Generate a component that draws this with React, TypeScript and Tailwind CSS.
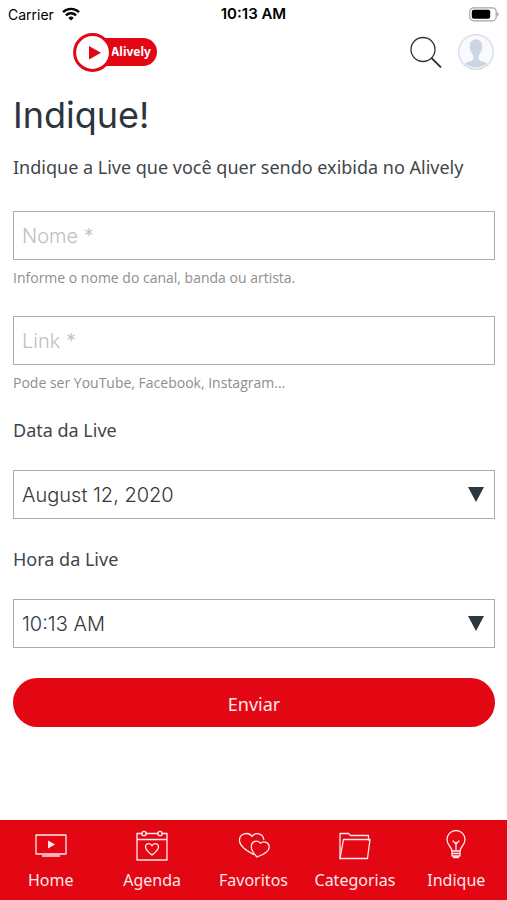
import type { ReactNode } from "react";

const line = {
  fill: "none",
  stroke: "currentColor",
  strokeWidth: 1.3,
  strokeLinejoin: "round" as const,
  strokeLinecap: "round" as const,
};

function StatusBar() {
  return (
    <div className="grid h-7 grid-cols-3 items-center pl-2 pr-2 font-['Inter','Liberation_Sans',sans-serif] text-[14px] text-black">
      <div className="flex items-center gap-2">
        <span>Carrier</span>
        <svg width="18" height="14" viewBox="0 0 18 14" fill="none" stroke="#000" strokeWidth="2.4" aria-label="Wi-Fi">
          <path d="M1 5.2a11.4 11.4 0 0 1 16 0" />
          <path d="M3.9 8.4a7.3 7.3 0 0 1 10.2 0" />
          <path d="M9 13.6 6.3 10.9a3.9 3.9 0 0 1 5.4 0Z" fill="#000" stroke="none" />
        </svg>
      </div>
      <span className="text-center text-[15px] font-semibold">10:13 AM</span>
      <svg className="justify-self-end" width="30" height="15" viewBox="0 0 30 15" aria-label="Battery">
        <rect x="0.8" y="0.8" width="26.4" height="13" rx="3.8" fill="#fff" stroke="#a3a3a3" strokeWidth="1.2" />
        <rect x="2.8" y="2.8" width="18.4" height="9" rx="2" fill="#000" />
        <path d="M28.2 5.2c2 .7 2 3.500 0 4.200Z" fill="#a3a3a3" />
      </svg>
    </div>
  );
}

function Logo() {
  return (
    <a href="#home" className="flex items-center" aria-label="Alively">
      <svg width="39" height="39" viewBox="0 0 39 39" className="relative z-10">
        <circle cx="19.5" cy="19.5" r="17.900" fill="#fff" stroke="#e30613" strokeWidth="3" />
        <path d="M16 13v13.500l12-6.750Z" fill="#e30613" />
      </svg>
      <span className="-ml-4 flex h-7 items-center rounded-r-full bg-[#e30613] pl-[15px] pr-[6px] font-['Noto_Sans','Open_Sans',sans-serif] text-[12px] font-bold text-white">
        Alively
      </span>
    </a>
  );
}

function Header() {
  return (
    <header className="flex h-12 items-center justify-between pl-[73px] pr-[13px]">
      <Logo />
      <div className="flex items-center gap-4">
        <button type="button" aria-label="Buscar">
          <svg width="32" height="32" viewBox="0 0 32 32" fill="none" stroke="#333" strokeWidth="1.300">
            <circle cx="13" cy="13.500" r="12" />
            <path d="m21.500 22 9.500 9.500" strokeWidth="1.800" />
          </svg>
        </button>
        <button type="button" aria-label="Perfil">
          <svg width="36" height="36" viewBox="0 0 36 36">
            <circle cx="18" cy="18" r="17.300" fill="#f8fafe" stroke="#d3d9e6" strokeWidth="1.200" />
            <path
              d="M18 5.500c-4.400 0-6.300 3-5.900 7.100-.9.300-.5 3.600.7 4.100.4 2 1.300 3.400 2.500 4.500v3.600c-.5 2.500-4.500 2.500-8.500 4.400a16.500 16.500 0 0 0 22.400 0c-4-1.900-8-1.900-8.500-4.400v-3.600c1.200-1.100 2.100-2.500 2.500-4.500 1.200-.5 1.600-3.800.7-4.100.4-4.100-1.500-7.100-5.900-7.100Z"
              fill="#cdd5e4"
            />
          </svg>
        </button>
      </div>
    </header>
  );
}

const fieldClass =
  "block h-[49px] w-full appearance-none rounded-none border border-[#ababab] bg-white px-2 font-['Inter','Liberation_Sans',sans-serif] text-[20px] font-light text-[#33383d] outline-none placeholder:text-[#c0c0c0] placeholder:opacity-100";

function TextField({ id, label, hint }: { id: string; label: string; hint: string }) {
  return (
    <div className="flex flex-col gap-2">
      <input id={id} aria-label={label} aria-describedby={id + "-hint"} placeholder={label + " *"} className={fieldClass} />
      <p id={id + "-hint"} className="font-['Open_Sans','Noto_Sans',sans-serif] text-[14px] leading-5 text-[#8e8e8e]">
        {hint}
      </p>
    </div>
  );
}

function SelectField({ id, label, value }: { id: string; label: string; value: string }) {
  return (
    <div className="flex flex-col gap-7">
      <label htmlFor={id} className="text-[18px] leading-6">
        {label}
      </label>
      <div className="relative">
        <select id={id} defaultValue={value} className={fieldClass}>
          <option>{value}</option>
        </select>
        <svg className="pointer-events-none absolute right-[11px] top-[17px]" width="16" height="15" viewBox="0 0 16 15" aria-hidden="true">
          <path d="M0 0h16L8 15Z" fill="#2d383e" />
        </svg>
      </div>
    </div>
  );
}

function NavItem({ label, children }: { label: string; children: ReactNode }) {
  return (
    <a href={"#" + label.toLowerCase()} className="flex flex-1 flex-col items-center gap-1.5">
      <svg width="32" height="32" viewBox="0 0 32 32" {...line} aria-hidden="true">
        {children}
      </svg>
      <span className="text-[16px] leading-6">{label}</span>
    </a>
  );
}

function BottomNav() {
  return (
    <nav className="mt-auto flex h-20 bg-[#e30613] pt-2.5 text-[#ffe9ea]">
      <NavItem label="Home">
        <path d="M1 5h30v19H1Z M7.500 26h17" />
        <path d="M13 10.500v8l7-4Z" fill="currentColor" stroke="none" />
      </NavItem>
      <NavItem label="Agenda">
        <path d="M6 3.500H1V30h30V3.500h-5M10 3.500h12M1 9.500h30" />
        <circle cx="8" cy="3.500" r="2.200" />
        <circle cx="24" cy="3.500" r="2.200" />
        <path d="M16 25c-3-2.500-6.500-5-6.500-8 0-4 5-4.500 6.500-1.200 1.500-3.300 6.500-2.800 6.500 1.200 0 3-3.500 5.500-6.500 8Z" />
      </NavItem>
      <NavItem label="Favoritos">
        <path d="M15.500 24.500C9.500 21 2 17 1.500 11c-.5-7.500 9-9.800 12.500-4.500C17 1.800 25 3.200 25.800 9.500" />
        <path d="M19 27c-2.800-3-5.800-6.500-5.700-10.500.1-5.200 6.500-7.300 9.200-3.200 3.300-2.800 8.700-.8 8.700 3.700 0 5.200-6.600 8-12.200 10Z" />
      </NavItem>
      <NavItem label="Categorias">
        <path d="M1 28.500V3.500h8.500l2 2H29.500V10" />
        <path d="M1 28.500 4.500 9.500H31l-2.500 19Z" />
      </NavItem>
      <NavItem label="Indique">
        <path d="M12 21c0-4-5-5.500-5-11.500a9 9 0 0 1 18 0C25 15.500 20 17 20 21Z" />
        <path d="M12 21v5h8v-5M12 23.500h8M13.500 27.500h5M16 20v-7.500M13 11l3 3 3-3" />
      </NavItem>
    </nav>
  );
}

export default function App() {
  return (
    <div className="flex min-h-screen flex-col bg-white font-['Noto_Sans','Open_Sans',sans-serif] text-[#41464b]">
      <StatusBar />
      <Header />
      <main className="pl-[13px] pr-3 pb-8 pt-3.5">
        <h1 className="font-['Inter','Liberation_Sans',sans-serif] text-[36px] leading-[50px] text-[#2d343c]">Indique!</h1>
        <p className="mt-[15px] text-[18px] leading-6">Indique a Live que você quer sendo exibida no Alively</p>
        <form className="mt-8 flex flex-col" onSubmit={(e) => e.preventDefault()}>
          <div className="flex flex-col gap-7">
            <TextField id="nome" label="Nome" hint="Informe o nome do canal, banda ou artista." />
            <TextField id="link" label="Link" hint="Pode ser YouTube, Facebook, Instagram..." />
          </div>
          <div className="mt-[25px] flex flex-col gap-7">
            <SelectField id="data" label="Data da Live" value="August 12, 2020" />
            <SelectField id="hora" label="Hora da Live" value="10:13 AM" />
          </div>
          <button type="submit" className="mt-[30px] h-[49px] rounded-full bg-[#e30613] pt-1 text-[18px] text-[#ffe9ea]">
            Enviar
          </button>
        </form>
      </main>
      <BottomNav />
    </div>
  );
}
